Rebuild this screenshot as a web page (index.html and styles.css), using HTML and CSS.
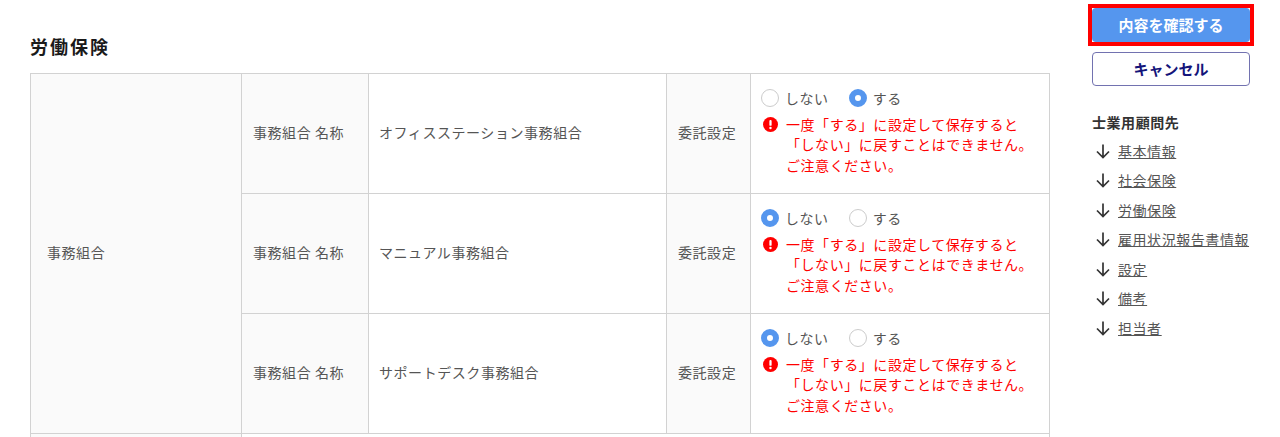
FILE: index.html
```html
<!DOCTYPE html>
<html lang="ja">
<head>
    <meta charset="UTF-8">
    <meta name="viewport" content="width=device-width, initial-scale=1.0">
    <title>労働保険</title>
    <link rel="stylesheet" href="styles.css">
</head>
<body>
    <div class="page">
        <main class="main">
            <h2 class="section-title">労働保険</h2>
            <table class="form-table">
                <colgroup>
                    <col class="col-group">
                    <col class="col-label">
                    <col class="col-name">
                    <col class="col-setting">
                    <col class="col-value">
                </colgroup>
                <tr>
                    <th class="group-cell" rowspan="3">事務組合</th>
                    <th>事務組合 名称</th>
                    <td>オフィスステーション事務組合</td>
                    <th>委託設定</th>
                    <td>
                        <div class="radios">
                            <label class="radio"><input type="radio" name="union1">しない</label>
                            <label class="radio"><input type="radio" name="union1" checked>する</label>
                        </div>
                        <div class="warning">
                            <svg class="warning-icon" viewBox="0 0 16 16"><circle cx="8" cy="8" r="8" fill="#f00"/><rect x="6.8" y="3.2" width="2.4" height="6.2" rx="1" fill="#fff"/><circle cx="8" cy="11.7" r="1.3" fill="#fff"/></svg>
                            <p>一度「する」に設定して保存すると<br>「しない」に戻すことはできません。<br>ご注意ください。</p>
                        </div>
                    </td>
                </tr>
                <tr>
                    <th>事務組合 名称</th>
                    <td>マニュアル事務組合</td>
                    <th>委託設定</th>
                    <td>
                        <div class="radios">
                            <label class="radio"><input type="radio" name="union2" checked>しない</label>
                            <label class="radio"><input type="radio" name="union2">する</label>
                        </div>
                        <div class="warning">
                            <svg class="warning-icon" viewBox="0 0 16 16"><circle cx="8" cy="8" r="8" fill="#f00"/><rect x="6.8" y="3.2" width="2.4" height="6.2" rx="1" fill="#fff"/><circle cx="8" cy="11.7" r="1.3" fill="#fff"/></svg>
                            <p>一度「する」に設定して保存すると<br>「しない」に戻すことはできません。<br>ご注意ください。</p>
                        </div>
                    </td>
                </tr>
                <tr>
                    <th>事務組合 名称</th>
                    <td>サポートデスク事務組合</td>
                    <th>委託設定</th>
                    <td>
                        <div class="radios">
                            <label class="radio"><input type="radio" name="union3" checked>しない</label>
                            <label class="radio"><input type="radio" name="union3">する</label>
                        </div>
                        <div class="warning">
                            <svg class="warning-icon" viewBox="0 0 16 16"><circle cx="8" cy="8" r="8" fill="#f00"/><rect x="6.8" y="3.2" width="2.4" height="6.2" rx="1" fill="#fff"/><circle cx="8" cy="11.7" r="1.3" fill="#fff"/></svg>
                            <p>一度「する」に設定して保存すると<br>「しない」に戻すことはできません。<br>ご注意ください。</p>
                        </div>
                    </td>
                </tr>
                <tr class="next-row">
                    <th class="group-cell"></th>
                    <td colspan="4"></td>
                </tr>
            </table>
        </main>
        <aside class="side">
            <div class="btn-highlight">
                <button class="btn btn-primary" type="button">内容を確認する</button>
            </div>
            <button class="btn btn-cancel" type="button">キャンセル</button>
            <h3 class="side-title">士業用顧問先</h3>
            <ul class="side-nav">
                <li><svg class="arrow" viewBox="0 0 16 16"><path d="M8 1.5V14.5M2 8.5L8 14.5L14 8.5"/></svg><a href="#">基本情報</a></li>
                <li><svg class="arrow" viewBox="0 0 16 16"><path d="M8 1.5V14.5M2 8.5L8 14.5L14 8.5"/></svg><a href="#">社会保険</a></li>
                <li><svg class="arrow" viewBox="0 0 16 16"><path d="M8 1.5V14.5M2 8.5L8 14.5L14 8.5"/></svg><a href="#">労働保険</a></li>
                <li><svg class="arrow" viewBox="0 0 16 16"><path d="M8 1.5V14.5M2 8.5L8 14.5L14 8.5"/></svg><a href="#">雇用状況報告書情報</a></li>
                <li><svg class="arrow" viewBox="0 0 16 16"><path d="M8 1.5V14.5M2 8.5L8 14.5L14 8.5"/></svg><a href="#">設定</a></li>
                <li><svg class="arrow" viewBox="0 0 16 16"><path d="M8 1.5V14.5M2 8.5L8 14.5L14 8.5"/></svg><a href="#">備考</a></li>
                <li><svg class="arrow" viewBox="0 0 16 16"><path d="M8 1.5V14.5M2 8.5L8 14.5L14 8.5"/></svg><a href="#">担当者</a></li>
            </ul>
        </aside>
    </div>
</body>
</html>
```

FILE: styles.css
```css
html, body {
    height: 437px;
    overflow: hidden;
}
body {
    font-family: "Noto Sans CJK JP", "Noto Sans", sans-serif;
    font-size: 14px;
    letter-spacing: 0.56px;
    color: #555;
    margin: 0;
    background-color: #fff;
}
.page {
    display: flex;
    align-items: flex-start;
}
.main {
    width: 1020px;
    margin-left: 30px;
    padding-top: 33px;
}
.section-title {
    font-size: 18px;
    line-height: 26px;
    letter-spacing: 2px;
    font-weight: 700;
    color: #1a1a1a;
    margin: 0 0 14px;
}
.form-table {
    width: 1019px;
    table-layout: fixed;
    border-collapse: collapse;
}
.col-group { width: 211px; }
.col-label { width: 127px; }
.col-name { width: 298px; }
.col-setting { width: 84px; }
.col-value { width: 299px; }
.form-table th,
.form-table td {
    border: 1px solid #d2d2d2;
    padding: 0 10px 4px;
    height: 120px;
    text-align: left;
    font-weight: 400;
    box-sizing: border-box;
}
.form-table th {
    background-color: #fafafa;
    padding-left: 11px;
}
.form-table .group-cell {
    padding-left: 16px;
}
.form-table td {
    padding-left: 10px;
}
.radios {
    display: flex;
    gap: 20px;
    line-height: 20px;
}
.radio {
    display: flex;
    align-items: center;
    gap: 6px;
}
.radio input {
    appearance: none;
    width: 18px;
    height: 18px;
    margin: 0;
    background-color: #fff;
    border: 1px solid #ccc;
    border-radius: 50%;
    box-sizing: border-box;
}
.radio input:checked {
    border: 6px solid #5596ee;
}
.warning {
    display: flex;
    gap: 8px;
    margin-top: 6px;
    color: #f00;
}
.warning-icon {
    flex: none;
    width: 15px;
    height: 15px;
    margin: 3px 0 0 2px;
}
.warning p {
    margin: 0;
    line-height: 20.5px;
}
.side {
    width: 158px;
    margin-left: 42px;
    padding-top: 4px;
}
.btn-highlight {
    width: 158px;
    border: 4px solid #f00;
    margin-left: -4px;
}
.btn {
    display: block;
    width: 158px;
    height: 34px;
    font-family: inherit;
    font-size: 15px;
    font-weight: 700;
    letter-spacing: 0;
    border-radius: 4px;
    padding: 0 0 2px;
}
.btn-primary {
    color: #fff;
    background-color: #5596ee;
    border: none;
}
.btn-cancel {
    margin-top: 6px;
    color: #14147a;
    background-color: #fff;
    border: 1px solid #7272b0;
}
.side-title {
    font-size: 14px;
    line-height: 20px;
    font-weight: 700;
    color: #333;
    margin: 26px 0 0;
}
.side-nav {
    list-style: none;
    margin: 4px 0 0;
    padding: 0;
}
.side-nav li {
    display: flex;
    align-items: center;
    height: 29.5px;
    gap: 7px;
    padding-left: 3px;
    white-space: nowrap;
}
.side-nav a {
    color: #555;
}
.arrow {
    flex: none;
    width: 16px;
    height: 16px;
    fill: none;
    stroke: #333;
    stroke-width: 1.7;
}
```
